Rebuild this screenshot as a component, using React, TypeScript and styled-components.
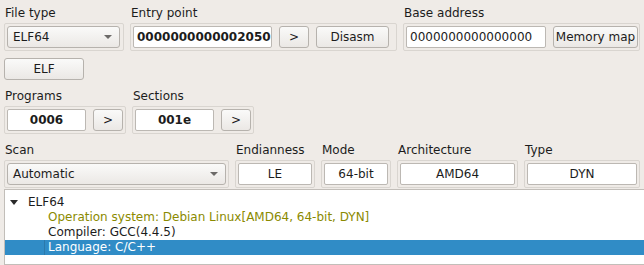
import * as React from "react";
import styled, { createGlobalStyle } from "styled-components";

const GlobalStyle = createGlobalStyle`
	html, body {
		margin: 0;
		padding: 0;
		background: #efebe7;
		overflow: hidden;
	}
	body {
		font-family: "DejaVu Sans", "Noto Sans", sans-serif;
		font-size: 12px;
		color: #1c1c1c;
	}
`;

export default function App() {
	return (
		<StyledPage>
			<GlobalStyle />
			<Row>
				<Field label="File type" width={120}>
					<Combo width={113} value="ELF64" />
				</Field>
				<Field label="Entry point" width={267}>
					<Edit width={139} bold align="left">0000000000002050</Edit>
					<Button width={30}>&gt;</Button>
					<Button width={73}>Disasm</Button>
				</Field>
				<Field label="Base address" width={237}>
					<Edit width={140} align="left">0000000000000000</Edit>
					<Button width={85}>Memory map</Button>
				</Field>
			</Row>
			<ElfRow>
				<Button width={80}>ELF</Button>
			</ElfRow>
			<Row>
				<Field label="Programs" width={122}>
					<Edit width={79} bold>0006</Edit>
					<Button width={30}>&gt;</Button>
				</Field>
				<Field label="Sections" width={122}>
					<Edit width={79} bold>001e</Edit>
					<Button width={30}>&gt;</Button>
				</Field>
			</Row>
			<Row>
				<Field label="Scan" width={225}>
					<Combo width={219} value="Automatic" />
				</Field>
				<Field label="Endianness" width={80}>
					<Edit width={74}>LE</Edit>
				</Field>
				<Field label="Mode" width={70}>
					<Edit width={64}>64-bit</Edit>
				</Field>
				<Field label="Architecture" width={121}>
					<Edit width={115}>AMD64</Edit>
				</Field>
				<Field label="Type" width={116}>
					<Edit width={110}>DYN</Edit>
				</Field>
			</Row>
			<Tree>
				<TreeRow level={0} first>
					<Arrow />
					ELF64
				</TreeRow>
				<TreeRow level={1} tone="olive">
					Operation system: Debian Linux[AMD64, 64-bit, DYN]
				</TreeRow>
				<TreeRow level={1}>Compiler: GCC(4.4.5)</TreeRow>
				<TreeRow level={1} selected>
					<Focus>Language: C/C++</Focus>
				</TreeRow>
			</Tree>
		</StyledPage>
	);
}

function Field(props: { label: string; width: number; children: React.ReactNode }) {
	return (
		<StyledField>
			<Label>{props.label}</Label>
			<Group width={props.width}>{props.children}</Group>
		</StyledField>
	);
}

function Combo(props: { width: number; value: string }) {
	return (
		<StyledCombo width={props.width}>
			<span>{props.value}</span>
			<ComboArrow />
		</StyledCombo>
	);
}

const StyledPage = styled.div`
	height: 100vh;
	display: flex;
	flex-direction: column;
	padding: 4px 0 0 4px;
	box-sizing: border-box;
	overflow: hidden;
`;

const Row = styled.div`
	display: flex;
	gap: 6px;
	margin-bottom: 7px;
`;

const ElfRow = styled.div`
	display: flex;
	margin: 0 0 7px;
`;

const StyledField = styled.div`
	display: flex;
	flex-direction: column;
`;

const Label = styled.div`
	height: 19px;
	line-height: 18px;
	padding-left: 1px;
	white-space: nowrap;
`;

const Group = styled.div<{ width: number }>`
	width: ${(p) => p.width}px;
	box-sizing: border-box;
	border: 1px solid #d9d5d0;
	border-radius: 2px;
	padding: 2px;
	display: flex;
	gap: 7px;
	align-items: center;
`;

const Edit = styled.div<{ width: number; bold?: boolean; align?: string }>`
	width: ${(p) => p.width}px;
	height: 22px;
	box-sizing: border-box;
	background: #ffffff;
	border: 1px solid #bcb8b3;
	border-radius: 2px;
	line-height: 20px;
	padding: 0 3px;
	font-weight: ${(p) => (p.bold ? "bold" : "normal")};
	text-align: ${(p) => p.align || "center"};
	white-space: nowrap;
	overflow: hidden;
	flex-shrink: 0;
`;

const Button = styled.div<{ width: number }>`
	width: ${(p) => p.width}px;
	height: 22px;
	box-sizing: border-box;
	border: 1px solid #b6b2ad;
	border-radius: 3px;
	background: linear-gradient(#fafaf9, #ebe8e5);
	line-height: 20px;
	text-align: center;
	white-space: nowrap;
	flex-shrink: 0;
`;

const StyledCombo = styled.div<{ width: number }>`
	width: ${(p) => p.width}px;
	height: 22px;
	box-sizing: border-box;
	border: 1px solid #b6b2ad;
	border-radius: 3px;
	background: linear-gradient(#fafaf9, #ebe8e5);
	display: flex;
	align-items: center;
	justify-content: space-between;
	padding: 0 7px 0 5px;
	flex-shrink: 0;
`;

const ComboArrow = styled.span`
	width: 0;
	height: 0;
	border-left: 4px solid transparent;
	border-right: 4px solid transparent;
	border-top: 4px solid #6c6a68;
`;

const Tree = styled.div`
	flex: 1;
	margin-right: -6px;
	margin-top: -6px;
	background: #ffffff;
	border: 1px solid #c2beb9;
	padding-top: 4px;
`;

const TreeRow = styled.div<{ level: number; selected?: boolean; tone?: string; first?: boolean }>`
	height: ${(p) => (p.first ? 16 : 15)}px;
	line-height: 15px;
	display: flex;
	align-items: center;
	padding-left: ${(p) => (p.level ? 43 : 5)}px;
	background: ${(p) => (p.selected ? "#308cc6" : "transparent")};
	color: ${(p) => (p.selected ? "#ffffff" : p.tone === "olive" ? "#8b8a00" : "#1c1c1c")};
	white-space: nowrap;
`;

const Arrow = styled.span`
	width: 0;
	height: 0;
	border-left: 4px solid transparent;
	border-right: 4px solid transparent;
	border-top: 5px solid #2a2a2a;
	margin-right: 10px;
`;

const Focus = styled.span`
	border-left: 1px solid #2b79ab;
	margin-left: -4px;
	padding-left: 3px;
	height: 15px;
`;
